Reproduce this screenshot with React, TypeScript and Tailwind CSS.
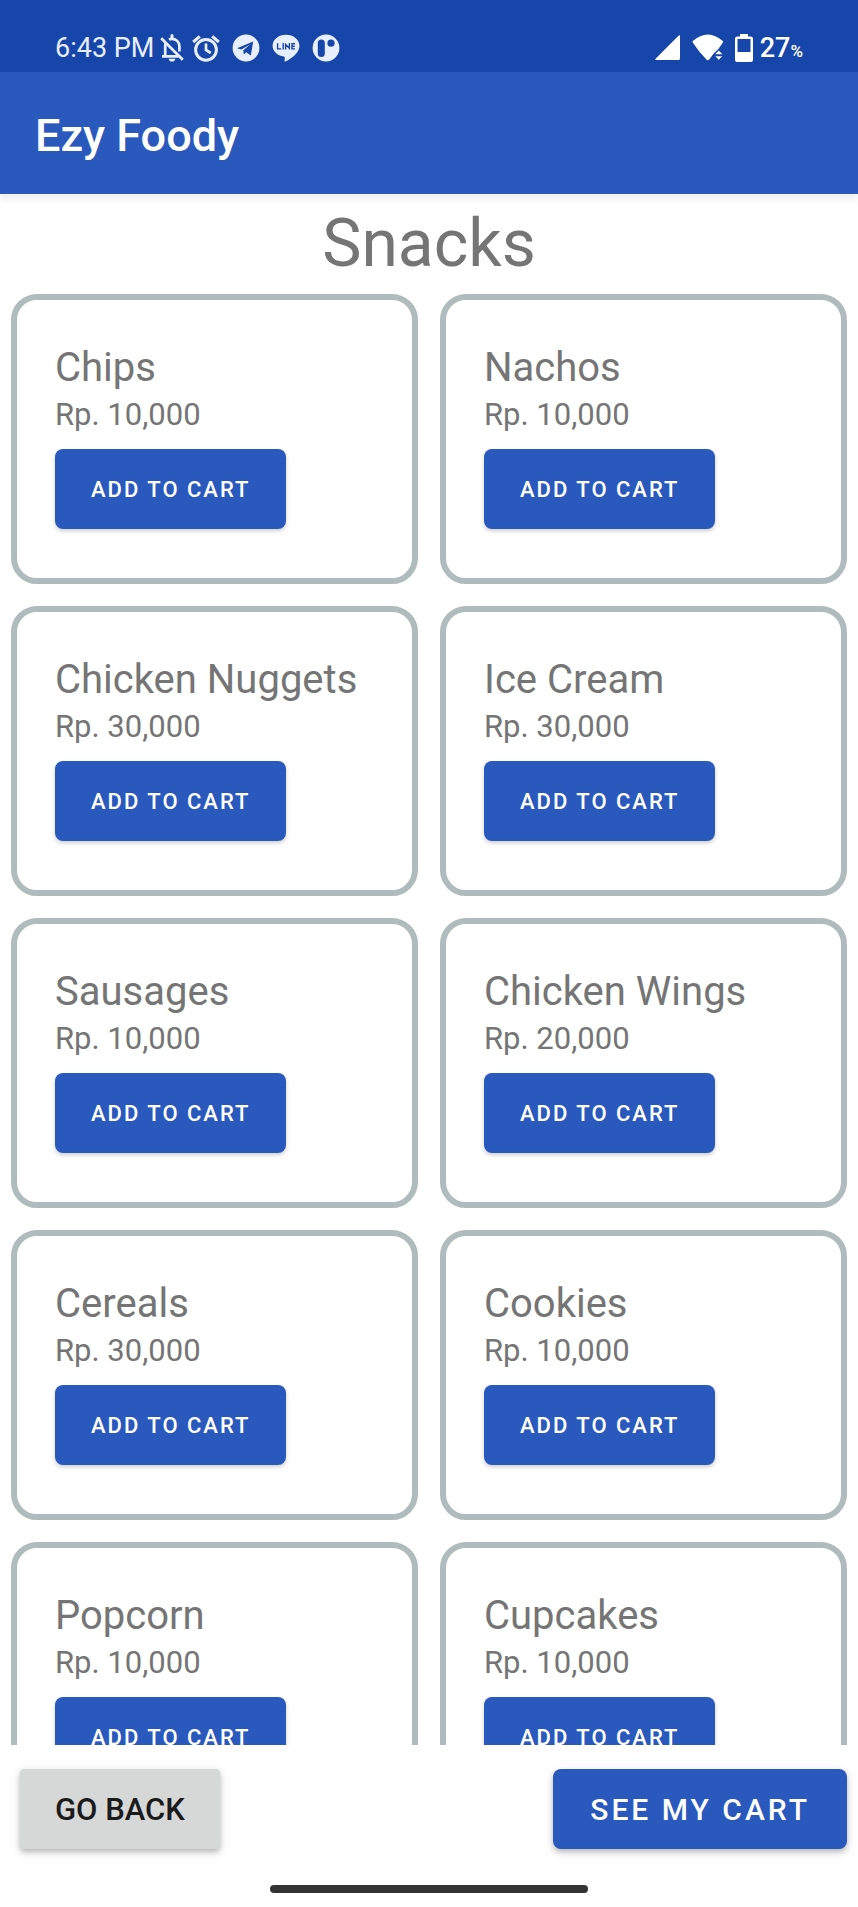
type Snack = { name: string; price: string };

const snacks: Snack[] = [
  { name: "Chips", price: "Rp. 10,000" },
  { name: "Nachos", price: "Rp. 10,000" },
  { name: "Chicken Nuggets", price: "Rp. 30,000" },
  { name: "Ice Cream", price: "Rp. 30,000" },
  { name: "Sausages", price: "Rp. 10,000" },
  { name: "Chicken Wings", price: "Rp. 20,000" },
  { name: "Cereals", price: "Rp. 30,000" },
  { name: "Cookies", price: "Rp. 10,000" },
  { name: "Popcorn", price: "Rp. 10,000" },
  { name: "Cupcakes", price: "Rp. 10,000" },
];

function BellOffIcon() {
  return (
    <svg className="h-7 w-6" viewBox="0 0 24 28" fill="none" aria-hidden="true">
      <path d="M2 22.4H18.5M5.2 22V11.5C5.2 10.5 5.5 9.6 6 8.7M9 5.6C10 5 11 4.8 12 4.8C16 4.8 19.4 8 19.4 12V17.5" stroke="currentColor" strokeWidth="2.7" />
      <path d="M12 1.6V4.5" stroke="currentColor" strokeWidth="3" strokeLinecap="round" />
      <path d="M1.2 4.2L22.8 25.8" stroke="currentColor" strokeWidth="2.7" />
      <path d="M8.8 24.8H15.2A3.2 2.8 0 0 1 8.8 24.8Z" fill="currentColor" />
    </svg>
  );
}

function AlarmIcon() {
  return (
    <svg className="h-7 w-7" viewBox="0 0 28 28" fill="none" stroke="currentColor" aria-hidden="true">
      <circle cx="14" cy="15.8" r="10.4" strokeWidth="3" />
      <path d="M1.2 8L7.8 2.3M26.8 8L20.2 2.3" strokeWidth="3" />
      <path d="M14 9.6V16L18.8 19" strokeWidth="2.7" />
    </svg>
  );
}

function TelegramIcon() {
  return (
    <svg className="h-7 w-7" viewBox="0 0 28 28" aria-hidden="true">
      <circle cx="14" cy="14" r="13.4" fill="currentColor" />
      <path d="M5 14.2L21.2 7.4L18.8 21.6L14.2 18.2L11.8 20.6L11.3 16.3L18.3 10.3L9.4 15.5Z" fill="#1746ab" />
    </svg>
  );
}

function LineIcon() {
  return (
    <svg className="h-7 w-7" viewBox="0 0 28 28" aria-hidden="true">
      <path d="M14 0.8C6.6 0.8 0.6 5.6 0.6 11.7C0.6 17.1 5.2 21.6 11.7 22.5C13 22.8 13 23.5 12.5 27.2C12.6 28 14 27.4 17 25.5C22 22.3 27.4 18 27.4 11.7C27.4 5.6 21.4 0.8 14 0.8Z" fill="currentColor" />
      <path d="M5.6 9.3V14.9H9.2M11.2 9V15.5M13.6 15.5V10.4L17.4 14.2V9M23 9.8H20V14.9H23M20 12.3H22.8" fill="none" stroke="#1746ab" strokeWidth="1.4" />
    </svg>
  );
}

function DiscIcon() {
  return (
    <svg className="h-7 w-7" viewBox="0 0 28 28" aria-hidden="true">
      <circle cx="14" cy="14" r="13.4" fill="currentColor" />
      <rect x="5.8" y="5.5" width="7" height="17.5" rx="3.5" fill="#1746ab" />
      <circle cx="19" cy="9.2" r="3.6" fill="#1746ab" />
    </svg>
  );
}

function SignalIcon() {
  return (
    <svg className="h-7 w-7" viewBox="0 0 28 28" fill="currentColor" aria-hidden="true">
      <path d="M24.5 1.8Q26 0.6 26 2.5V24.5Q26 26 24.5 26H2.5Q0.4 26 1.8 24.5Z" />
    </svg>
  );
}

function WifiIcon() {
  return (
    <svg className="h-7 w-8" viewBox="0 0 32 28" fill="currentColor" aria-hidden="true">
      <path d="M0.8 7Q15.8 -6 30.8 7Q31.4 7.6 30.8 8.4L26.6 14.8L21.7 19.4L17.2 25.5Q15.8 26.8 14.4 25.5Q6.5 17.5 0.8 8.4Q0.3 7.6 0.8 7Z" />
      <path d="M23.3 20.2L26.8 16.6L30.3 20.2ZM23.3 22.2L26.8 25.8L30.3 22.2Z" />
    </svg>
  );
}

function BatteryIcon() {
  return (
    <svg className="h-7 w-5" viewBox="0 0 20 28" aria-hidden="true">
      <path fill="currentColor" fillRule="evenodd" d="M6 0H14V2.5H16.5Q19 2.5 19 4.5V26Q19 28 17 28H3Q1 28 1 26V4.5Q1 2.5 3.5 2.5H6ZM3.5 5V18H16.5V5Z" />
    </svg>
  );
}

function StatusBar() {
  return (
    <div className="flex h-18 shrink-0 items-end justify-between bg-[#1746ab] px-[55px] pb-2 text-[27px] leading-8 text-[#e8effc]">
      <div className="flex items-center">
        <span>6:43 PM</span>
        <div className="ml-1.5 flex items-center gap-3">
          <div className="flex items-center gap-2">
            <BellOffIcon />
            <AlarmIcon />
          </div>
          <TelegramIcon />
          <LineIcon />
          <DiscIcon />
        </div>
      </div>
      <div className="flex items-center text-white">
        <div className="mr-1.5 flex items-center gap-2.5">
          <SignalIcon />
          <WifiIcon />
          <BatteryIcon />
        </div>
        <div className="flex items-baseline font-medium">
          <span>27</span>
          <span className="text-[17px] leading-none">%</span>
        </div>
      </div>
    </div>
  );
}

function SnackCard({ name, price }: Snack) {
  return (
    <li className="flex h-[290px] flex-col items-start rounded-[26px] border-6 border-[#b0bbbd] bg-white px-[38px] pt-11">
      <h2 className="text-[40px] leading-12 whitespace-nowrap">{name}</h2>
      <p className="text-[31px] leading-[46px]">{price}</p>
      <button
        type="button"
        aria-label={`Add ${name} to cart`}
        className="mt-[11px] h-20 rounded-lg bg-[#2a59be] px-9 text-[22px] font-medium tracking-[2px] text-white shadow-[0_2px_4px_rgba(0,0,0,0.2)]"
      >
        ADD TO CART
      </button>
    </li>
  );
}

export default function App() {
  return (
    <div className="flex h-screen flex-col bg-[#fefefe] font-['Roboto',sans-serif] text-[#757575]">
      <StatusBar />
      <header className="z-10 flex h-[122px] shrink-0 items-center bg-[#2a59be] px-[35px] pt-1.5 text-white shadow-[0_6px_6px_rgba(0,0,0,0.05)]">
        <span className="text-[45px] font-medium">Ezy Foody</span>
      </header>
      <main className="flex min-h-0 flex-1 flex-col">
        <h1 className="shrink-0 pt-1.5 pb-1.5 text-center text-[66px] leading-[88px]">Snacks</h1>
        <ul className="grid min-h-0 flex-1 grid-cols-2 content-start gap-[22px] overflow-y-auto px-[11px] [scrollbar-width:none]">
          {snacks.map((snack) => (
            <SnackCard key={snack.name} {...snack} />
          ))}
        </ul>
      </main>
      <footer className="shrink-0 pt-6">
        <div className="flex items-center justify-between pr-[11px] pl-5">
          <button
            type="button"
            className="h-20 rounded-sm bg-[#d6d7d7] px-[35px] pt-0.5 text-[31px] font-medium text-[#1b1b1b] shadow-[0_3px_6px_rgba(0,0,0,0.3)]"
          >
            GO BACK
          </button>
          <button
            type="button"
            className="h-20 rounded-lg bg-[#2a59be] px-[37px] text-[30px] font-medium tracking-[3px] text-white shadow-[0_3px_6px_rgba(0,0,0,0.3)]"
          >
            SEE MY CART
          </button>
        </div>
        <div className="mx-auto mt-9 mb-3.5 h-2 w-[37%] rounded-full bg-[#333333]" />
      </footer>
    </div>
  );
}
